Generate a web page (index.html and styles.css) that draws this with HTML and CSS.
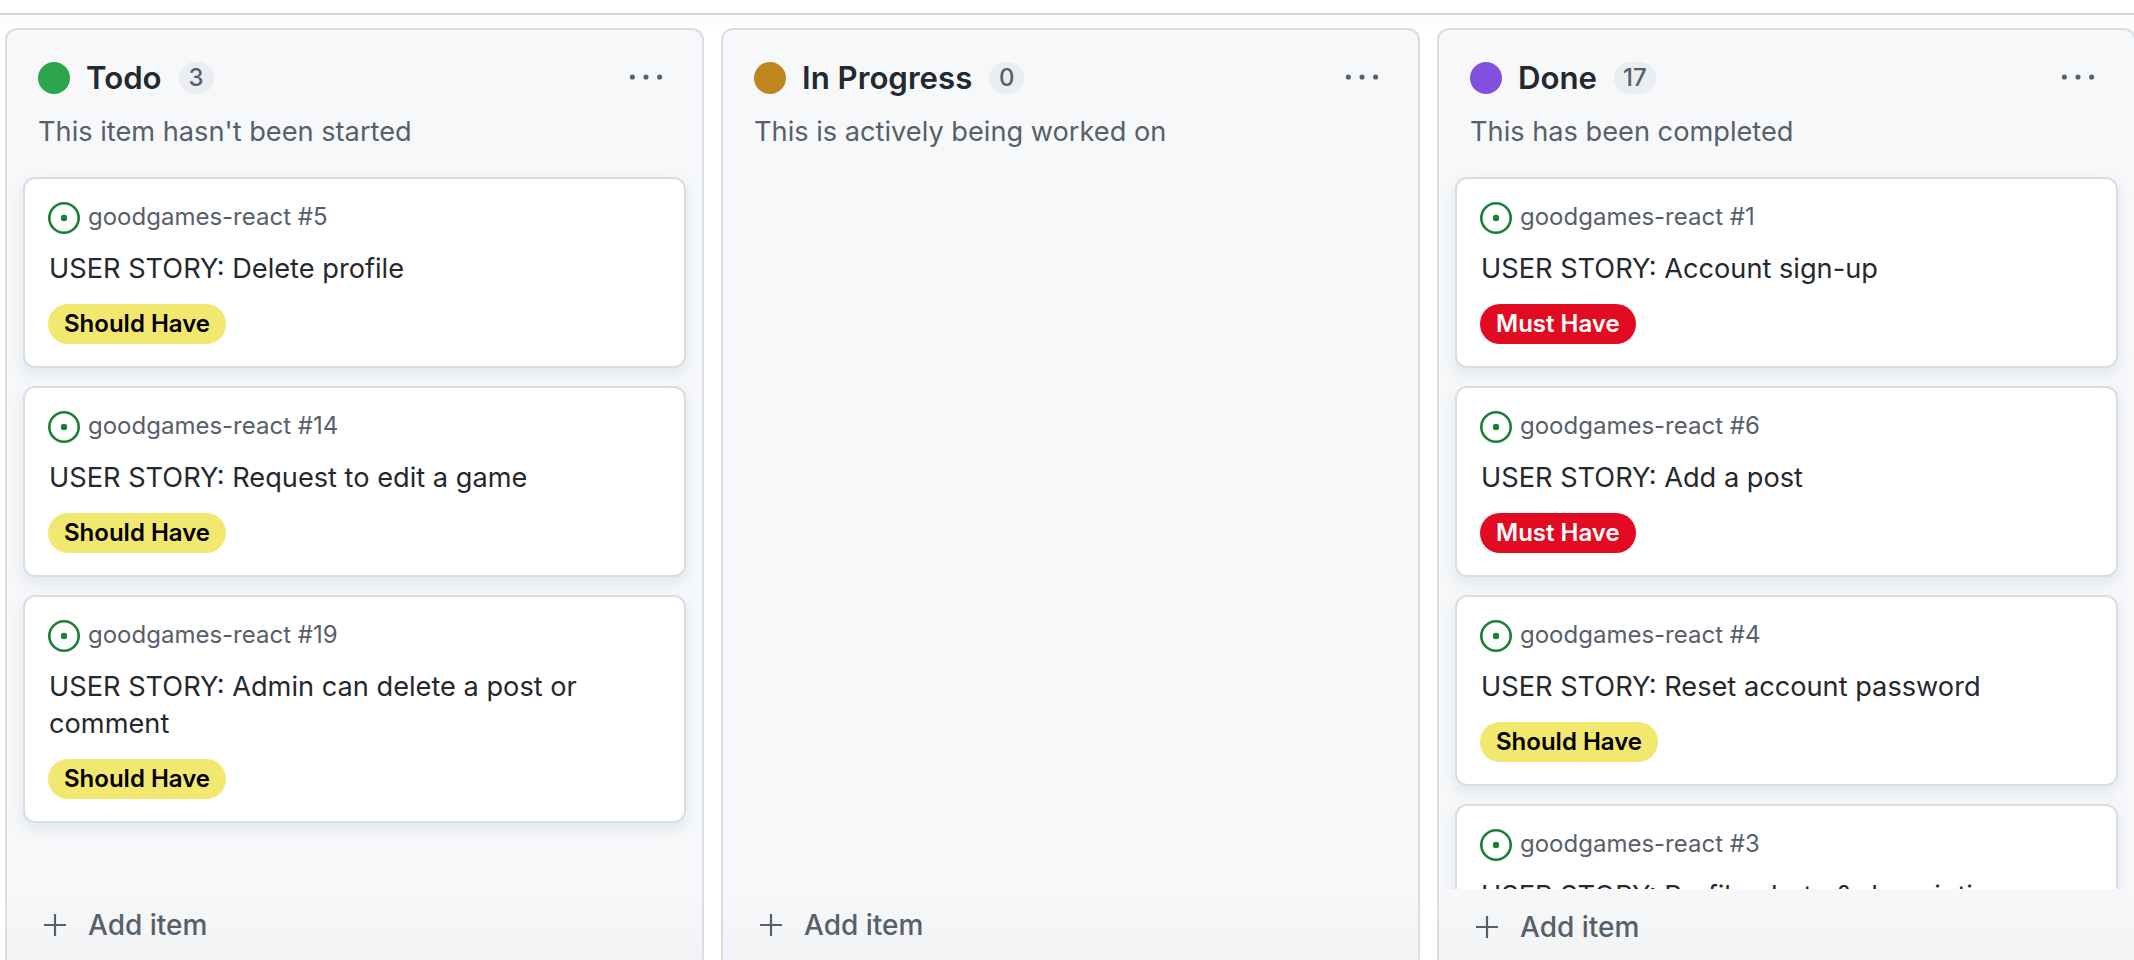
FILE: index.html
```html
<!DOCTYPE html>
<html lang="en">
<head>
<meta charset="UTF-8">
<title>Project board</title>
<link rel="stylesheet" href="styles.css">
</head>
<body>
	<div class="topbar"></div>
	<div class="board">
		<section class="column">
			<header class="col-head">
				<span class="dot dot-green"></span>
				<h2 class="col-name">Todo</h2>
				<span class="counter">3</span>
				<svg class="kebab" viewBox="0 0 40 8"><circle cx="4" cy="4" r="3"/><circle cx="20" cy="4" r="3"/><circle cx="36" cy="4" r="3"/></svg>
			</header>
			<p class="col-desc">This item hasn't been started</p>
			<div class="cards">
				<article class="card">
					<div class="meta"><svg class="issue" viewBox="0 0 32 32"><circle class="ring" cx="16" cy="16" r="14.7"/><circle class="core" cx="16" cy="16" r="3.2"/></svg>goodgames-react #5</div>
					<div class="card-title">USER STORY: Delete profile</div>
					<span class="tag tag-should">Should Have</span>
				</article>
				<article class="card">
					<div class="meta"><svg class="issue" viewBox="0 0 32 32"><circle class="ring" cx="16" cy="16" r="14.7"/><circle class="core" cx="16" cy="16" r="3.2"/></svg>goodgames-react #14</div>
					<div class="card-title">USER STORY: Request to edit a game</div>
					<span class="tag tag-should">Should Have</span>
				</article>
				<article class="card">
					<div class="meta"><svg class="issue" viewBox="0 0 32 32"><circle class="ring" cx="16" cy="16" r="14.7"/><circle class="core" cx="16" cy="16" r="3.2"/></svg>goodgames-react #19</div>
					<div class="card-title">USER STORY: Admin can delete a post or comment</div>
					<span class="tag tag-should">Should Have</span>
				</article>
			</div>
			<footer class="add-item">
				<svg class="plus" viewBox="0 0 24 24"><path d="M12 1v22M1 12h22"/></svg>Add item
			</footer>
		</section>

		<section class="column">
			<header class="col-head">
				<span class="dot dot-yellow"></span>
				<h2 class="col-name">In Progress</h2>
				<span class="counter">0</span>
				<svg class="kebab" viewBox="0 0 40 8"><circle cx="4" cy="4" r="3"/><circle cx="20" cy="4" r="3"/><circle cx="36" cy="4" r="3"/></svg>
			</header>
			<p class="col-desc">This is actively being worked on</p>
			<div class="cards"></div>
			<footer class="add-item">
				<svg class="plus" viewBox="0 0 24 24"><path d="M12 1v22M1 12h22"/></svg>Add item
			</footer>
		</section>

		<section class="column">
			<header class="col-head">
				<span class="dot dot-purple"></span>
				<h2 class="col-name">Done</h2>
				<span class="counter">17</span>
				<svg class="kebab" viewBox="0 0 40 8"><circle cx="4" cy="4" r="3"/><circle cx="20" cy="4" r="3"/><circle cx="36" cy="4" r="3"/></svg>
			</header>
			<p class="col-desc">This has been completed</p>
			<div class="cards">
				<article class="card">
					<div class="meta"><svg class="issue" viewBox="0 0 32 32"><circle class="ring" cx="16" cy="16" r="14.7"/><circle class="core" cx="16" cy="16" r="3.2"/></svg>goodgames-react #1</div>
					<div class="card-title">USER STORY: Account sign-up</div>
					<span class="tag tag-must">Must Have</span>
				</article>
				<article class="card">
					<div class="meta"><svg class="issue" viewBox="0 0 32 32"><circle class="ring" cx="16" cy="16" r="14.7"/><circle class="core" cx="16" cy="16" r="3.2"/></svg>goodgames-react #6</div>
					<div class="card-title">USER STORY: Add a post</div>
					<span class="tag tag-must">Must Have</span>
				</article>
				<article class="card">
					<div class="meta"><svg class="issue" viewBox="0 0 32 32"><circle class="ring" cx="16" cy="16" r="14.7"/><circle class="core" cx="16" cy="16" r="3.2"/></svg>goodgames-react #4</div>
					<div class="card-title">USER STORY: Reset account password</div>
					<span class="tag tag-should">Should Have</span>
				</article>
				<article class="card">
					<div class="meta"><svg class="issue" viewBox="0 0 32 32"><circle class="ring" cx="16" cy="16" r="14.7"/><circle class="core" cx="16" cy="16" r="3.2"/></svg>goodgames-react #3</div>
					<div class="card-title">USER STORY: Profile photo &amp; description</div>
				</article>
			</div>
			<footer class="add-item add-item-low">
				<svg class="plus" viewBox="0 0 24 24"><path d="M12 1v22M1 12h22"/></svg>Add item
			</footer>
		</section>
	</div>
</body>
</html>
```

FILE: styles.css
```css
*{margin: 0; padding: 0; box-sizing: border-box;}
html, body{height: 100%; overflow: hidden;}
body{background: #fff; font-family: Inter, "Liberation Sans", sans-serif; color: #24292f;}

.topbar{height: 15px; border-bottom: 2px solid #d0d7de;}

.board{
	display: flex;
	gap: 17px;
	height: 945px;
	padding: 13px 0 0 5px;
	background: linear-gradient(#fafafa, #fff 14px);
}

.column{
	flex: none;
	display: flex;
	flex-direction: column;
	width: 699px;
	height: 960px;
	border: 2px solid #d8dee4;
	border-radius: 12px;
	background: #f6f8fa;
}

.col-head{
	display: flex;
	align-items: center;
	height: 32px;
	margin: 32px 31px 0 31px;
}
.dot{width: 32px; height: 32px; border-radius: 50%; margin-right: 16px;}
.dot-green{background: #2da44e;}
.dot-yellow{background: #bf861f;}
.dot-purple{background: #8250df;}
.col-name{font-size: 31.2px; font-weight: 600; line-height: 32px;}
.counter{
	min-width: 35px;
	height: 32px;
	margin-left: 17px;
	padding: 0 9px;
	border-radius: 16px;
	background: #eaeef2;
	color: #57606a;
	font-size: 24px;
	font-weight: 500;
	line-height: 32px;
	text-align: center;
}
.kebab{width: 34px; height: 8px; margin: -3px 8px 0 auto; fill: #57606a;}

.col-desc{
	margin: 22px 31px 0;
	color: #57606a;
	font-size: 27.2px;
	line-height: 32px;
}

.cards{
	flex: none;
	display: flex;
	flex-direction: column;
	gap: 18px;
	height: 741px;
	padding: 29px 16px 0;
	overflow: hidden;
}
.card{
	flex: none;
	padding: 23px 23px 22px;
	border: 2px solid #d8dee4;
	border-radius: 12px;
	background: #fff;
	box-shadow: 0 6px 14px rgba(140,149,159,.18);
}
.meta{
	display: flex;
	gap: 8px;
	height: 32px;
	color: #57606a;
	font-size: 24px;
	line-height: 30px;
}
.issue{width: 32px; height: 32px; flex: none;}
.ring{fill: none; stroke: #1a7f37; stroke-width: 2.6;}
.core{fill: #1a7f37;}
.card-title{margin-top: 16px; padding-left: 1px; font-size: 27.2px; line-height: 37px;}
.tag{
	display: block;
	width: fit-content;
	height: 40px;
	margin-top: 17px;
	padding: 0 16px;
	border-radius: 20px;
	font-size: 24px;
	font-weight: 600;
	line-height: 40px;
}
.tag-should{background: #f2e76f; color: #000;}
.tag-must{background: #e20b21; color: #fff;}

.add-item{
	flex: 1;
	display: flex;
	align-items: flex-start;
	gap: 21px;
	padding: 20px 0 0 36px;
	color: #57606a;
	font-size: 28px;
	font-weight: 500;
	line-height: 32px;
	background: linear-gradient(#f6f8fa, #f1f3f5 70px);
}
.add-item-low{padding-top: 22px;}
.plus{width: 24px; height: 24px; margin-top: 4px; flex: none; fill: none; stroke: #57606a; stroke-width: 2.2;}
```
